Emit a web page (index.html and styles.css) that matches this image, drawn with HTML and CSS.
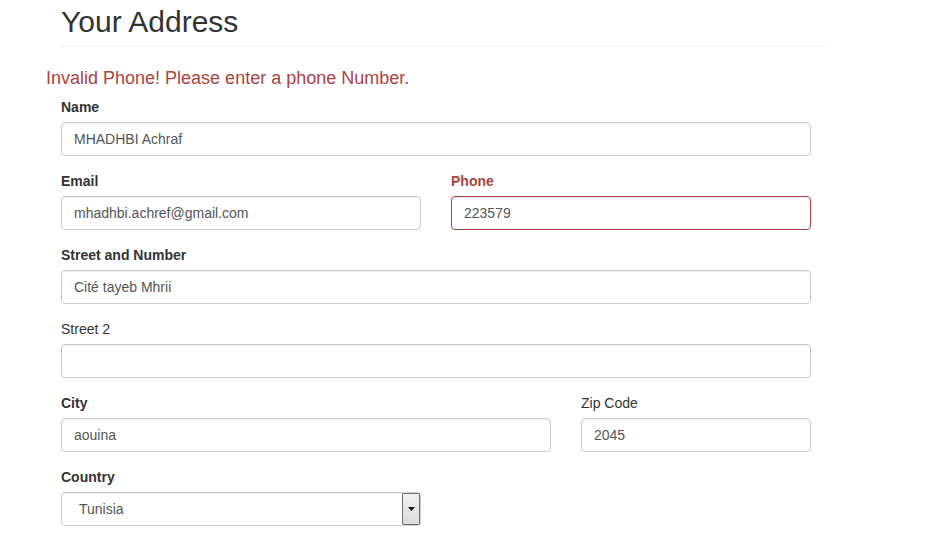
FILE: index.html
```html
<!DOCTYPE html>
<html>
<head>
<meta charset="utf-8">
<link rel="stylesheet" href="styles.css">
</head>
<body>
<div class="container">
  <div class="page-header"><h2>Your Address</h2></div>
  <p class="error-msg">Invalid Phone! Please enter a phone Number.</p>
  <div class="row">
    <div class="col col-12 form-group">
      <label class="label strong">Name</label>
      <div class="form-control">MHADHBI Achraf</div>
    </div>
  </div>
  <div class="row">
    <div class="col col-6 form-group">
      <label class="label strong">Email</label>
      <div class="form-control">mhadhbi.achref@gmail.com</div>
    </div>
    <div class="col col-6 form-group has-error">
      <label class="label strong">Phone</label>
      <div class="form-control">223579</div>
    </div>
  </div>
  <div class="row">
    <div class="col col-12 form-group">
      <label class="label strong">Street and Number</label>
      <div class="form-control">Cité tayeb Mhrii</div>
    </div>
  </div>
  <div class="row">
    <div class="col col-12 form-group">
      <label class="label">Street 2</label>
      <div class="form-control"></div>
    </div>
  </div>
  <div class="row">
    <div class="col col-8 form-group">
      <label class="label strong">City</label>
      <div class="form-control">aouina</div>
    </div>
    <div class="col col-4 form-group">
      <label class="label">Zip Code</label>
      <div class="form-control">2045</div>
    </div>
  </div>
  <div class="row">
    <div class="col col-6 form-group">
      <label class="label strong">Country</label>
      <div class="form-control select-box">
        <span class="select-text">Tunisia</span>
        <span class="select-btn"><svg width="7" height="4" viewBox="0 0 7 4"><path d="M0 0H7L3.5 4Z" fill="#111"/></svg></span>
      </div>
    </div>
  </div>
</div>
</body>
</html>
```
FILE: styles.css
```css
* { box-sizing: border-box; }
body {
  margin: 0;
  background: #fff;
  font-family: "Liberation Sans", Arial, sans-serif;
  font-size: 14px;
  line-height: 20px;
  color: #333;
}
.container {
  width: 780px;
  margin-left: 46px;
}
.page-header {
  margin: 5px 0 0 15px;
  padding-bottom: 8px;
  border-bottom: 1px solid #eee;
}
.page-header h2 {
  margin: 0;
  font-size: 30px;
  font-weight: 500;
  line-height: 33px;
  color: #333;
}
.error-msg {
  margin: 18px 0 0 0;
  font-size: 18px;
  line-height: 26px;
  color: #a94442;
}
.row {
  display: flex;
}
.col {
  padding: 0 15px;
}
.col-12 { width: 100%; }
.col-8 { width: 66.6667%; }
.col-6 { width: 50%; }
.col-4 { width: 33.3333%; }
.form-group {
  margin-bottom: 15px;
}
.label {
  display: block;
  margin-bottom: 5px;
  font-weight: normal;
  color: #333;
}
.label.strong { font-weight: bold; }
.error-msg + .row { margin-top: 6px; }
.form-control {
  height: 34px;
  padding: 6px 12px;
  border: 1px solid #ccc;
  border-radius: 4px;
  color: #555;
  font-size: 14px;
  line-height: 20px;
  box-shadow: inset 0 1px 1px rgba(0,0,0,0.075);
  white-space: nowrap;
}
.has-error .label { color: #a94442; }
.has-error .form-control { border-color: #a94442; }
.select-box {
  display: flex;
  align-items: stretch;
  padding: 0 0 0 17px;
}
.select-text {
  flex: 1;
  padding-top: 6px;
}
.select-btn {
  width: 18px;
  border: 1px solid #707070;
  border-radius: 1px;
  background: linear-gradient(#f2f2f2, #dcdcdc);
  display: flex;
  align-items: center;
  justify-content: center;
}
```
